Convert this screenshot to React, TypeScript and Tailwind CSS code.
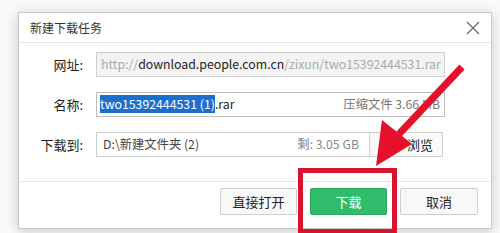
export default function App() {
  return (
    <div
      className="relative h-[233px] w-[500px] overflow-hidden bg-[#f9f9f9] pl-[18px] pt-[12px]"
      style={{ fontFamily: '"Noto Sans CJK SC", "Noto Sans", sans-serif' }}
    >
      {/* Dialog */}
      <div className="flex h-[217px] w-[474px] flex-col border border-[#c9c9c9] bg-white shadow-[0_2px_12px_rgba(0,0,0,0.2)]">
        {/* Title bar */}
        <div className="flex h-[30px] shrink-0 items-center justify-between border-b border-[#e6e6e6] pl-[11px] pr-[11px]">
          <span className="text-[12px] text-[#333]">新建下载任务</span>
          <svg width="14" height="14" viewBox="0 0 14 14" className="text-[#666]">
            <path d="M1 1 L13 13 M13 1 L1 13" stroke="currentColor" strokeWidth="1.2" fill="none" />
          </svg>
        </div>

        {/* Body */}
        <div className="flex flex-1 flex-col gap-[15px] border-b border-[#e8e8e8] pt-[9px] text-[12.3px]">
          <div className="flex items-center">
            <div className="w-[64px] text-right text-[13px] text-[#222]">网址:</div>
            <div className="ml-[13px] flex h-[25px] w-[349px] items-center overflow-hidden whitespace-nowrap border border-[#cfcfcf] bg-[#f3f3f3] pl-[4px]">
              <span className="text-[#aaa]">http://</span>
              <span className="text-[#222]">download.people.com.cn</span>
              <span className="text-[#aaa]">/zixun/two15392444531.rar</span>
            </div>
          </div>

          <div className="flex items-center">
            <div className="w-[64px] text-right text-[13px] text-[#222]">名称:</div>
            <div className="ml-[13px] flex h-[25px] w-[349px] items-center justify-between whitespace-nowrap border border-[#bdbdbd] bg-white pl-[3px] pr-[4px]">
              <span className="text-[#222]">
                <span className="bg-[#1a6fcf] text-white">two15392444531 (1)</span>.rar
              </span>
              <span className="text-[#777]">压缩文件 3.66 MB</span>
            </div>
          </div>

          <div className="flex items-center">
            <div className="w-[64px] text-right text-[13px] text-[#222]">下载到:</div>
            <div className="ml-[13px] flex h-[25px] w-[274px] items-center justify-between whitespace-nowrap border border-[#cfcfcf] bg-white pl-[6px] pr-[10px]">
              <span className="text-[#444]">D:\新建文件夹 (2)</span>
              <span className="text-[#888]">剩: 3.05 GB</span>
            </div>
            <div className="flex h-[25px] w-[73px] items-center border border-l-0 border-[#cfcfcf] bg-[#fafafa] pl-[9px] pr-[9px]">
              <span className="text-[8px] text-[#777]">▼</span>
              <span className="ml-auto text-[13px] text-[#222]">浏览</span>
            </div>
          </div>
        </div>

        {/* Footer */}
        <div className="flex h-[46px] shrink-0 justify-end gap-[13px] pr-[13px] pt-[6px] text-[13px]">
          <button className="h-[27px] w-[77px] rounded-[2px] border border-[#cfcfcf] bg-[#f8f8f8] text-[#222]">
            直接打开
          </button>
          <button className="h-[27px] w-[77px] rounded-[2px] border border-[#2aa860] bg-[#2fbd6b] text-white">
            下载
          </button>
          <button className="h-[27px] w-[78px] rounded-[2px] border border-[#cfcfcf] bg-[#f8f8f8] text-[#222]">
            取消
          </button>
        </div>
      </div>

      {/* Red highlight box */}
      <div className="absolute left-[298px] top-[168px] h-[66px] w-[99px] border-[5px] border-[#d8132f]" />

      {/* Red arrow */}
      <svg className="absolute left-0 top-0" width="500" height="233" viewBox="0 0 500 233">
        <line x1="462" y1="67" x2="399" y2="134" stroke="#e5102a" strokeWidth="7" strokeLinecap="butt" />
        <polygon points="376,166 382,120 412,144" fill="#e5102a" />
      </svg>
    </div>
  );
}
